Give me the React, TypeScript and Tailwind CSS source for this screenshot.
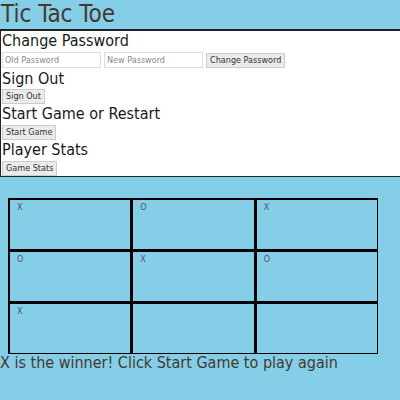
import React from "react";

const board = ["X", "O", "X", "O", "X", "O", "X", "", ""];

export default function App() {
  const font = { fontFamily: '"DejaVu Sans Condensed", "DejaVu Sans", sans-serif' };

  return (
    <div
      className="w-[400px] h-[400px] bg-[#84cee8] text-[#45392f] overflow-hidden"
      style={font}
    >
      <h1 className="text-[24px] leading-[29px] pl-[1px]">Tic Tac Toe</h1>
      <div className="bg-white border-t-2 border-b border-l border-[#222] pl-[1px]">
        <h2 className="text-[16px] leading-[20px] text-[#1a1a1a]">Change Password</h2>
        <div className="flex items-center gap-[3px] h-[18px]">
          <input
            placeholder="Old Password"
            className="w-[99px] h-[16px] border border-[#ddd] px-[2px] text-[9px] placeholder:text-[#888] outline-none"
          />
          <input
            placeholder="New Password"
            className="w-[99px] h-[16px] border border-[#ddd] px-[2px] text-[9px] placeholder:text-[#888] outline-none"
          />
          <button className="h-[15px] px-[3px] bg-[#ebebeb] border border-[#ccc] text-[9px] text-[#333] leading-none">
            Change Password
          </button>
        </div>
        <h2 className="text-[16px] leading-[19px] text-[#1a1a1a]">Sign Out</h2>
        <div className="h-[16px] flex items-center">
          <button className="h-[15px] px-[3px] bg-[#ebebeb] border border-[#ccc] text-[9px] text-[#333] leading-none">
            Sign Out
          </button>
        </div>
        <h2 className="text-[16px] leading-[20px] text-[#1a1a1a]">Start Game or Restart</h2>
        <div className="h-[16px] flex items-center">
          <button className="h-[15px] px-[3px] bg-[#ebebeb] border border-[#ccc] text-[9px] text-[#333] leading-none">
            Start Game
          </button>
        </div>
        <h2 className="text-[16px] leading-[20px] text-[#1a1a1a]">Player Stats</h2>
        <div className="h-[16px] flex items-center">
          <button className="h-[15px] px-[3px] bg-[#ebebeb] border border-[#ccc] text-[9px] text-[#333] leading-none">
            Game Stats
          </button>
        </div>
      </div>

      {/* board */}
      <div className="mt-[21px] ml-[8px] w-[370px] grid grid-cols-3">
        {board.map((cell, i) => (
          <div
            key={i}
            className="h-[52px] border-t-2 border-l-2 border-r border-b border-black pl-[7px] pt-[1px] text-[9px] text-[#555]"
          >
            {cell}
          </div>
        ))}
      </div>
      <p className="text-[16px] leading-[17px]">X is the winner! Click Start Game to play again</p>
    </div>
  );
}
